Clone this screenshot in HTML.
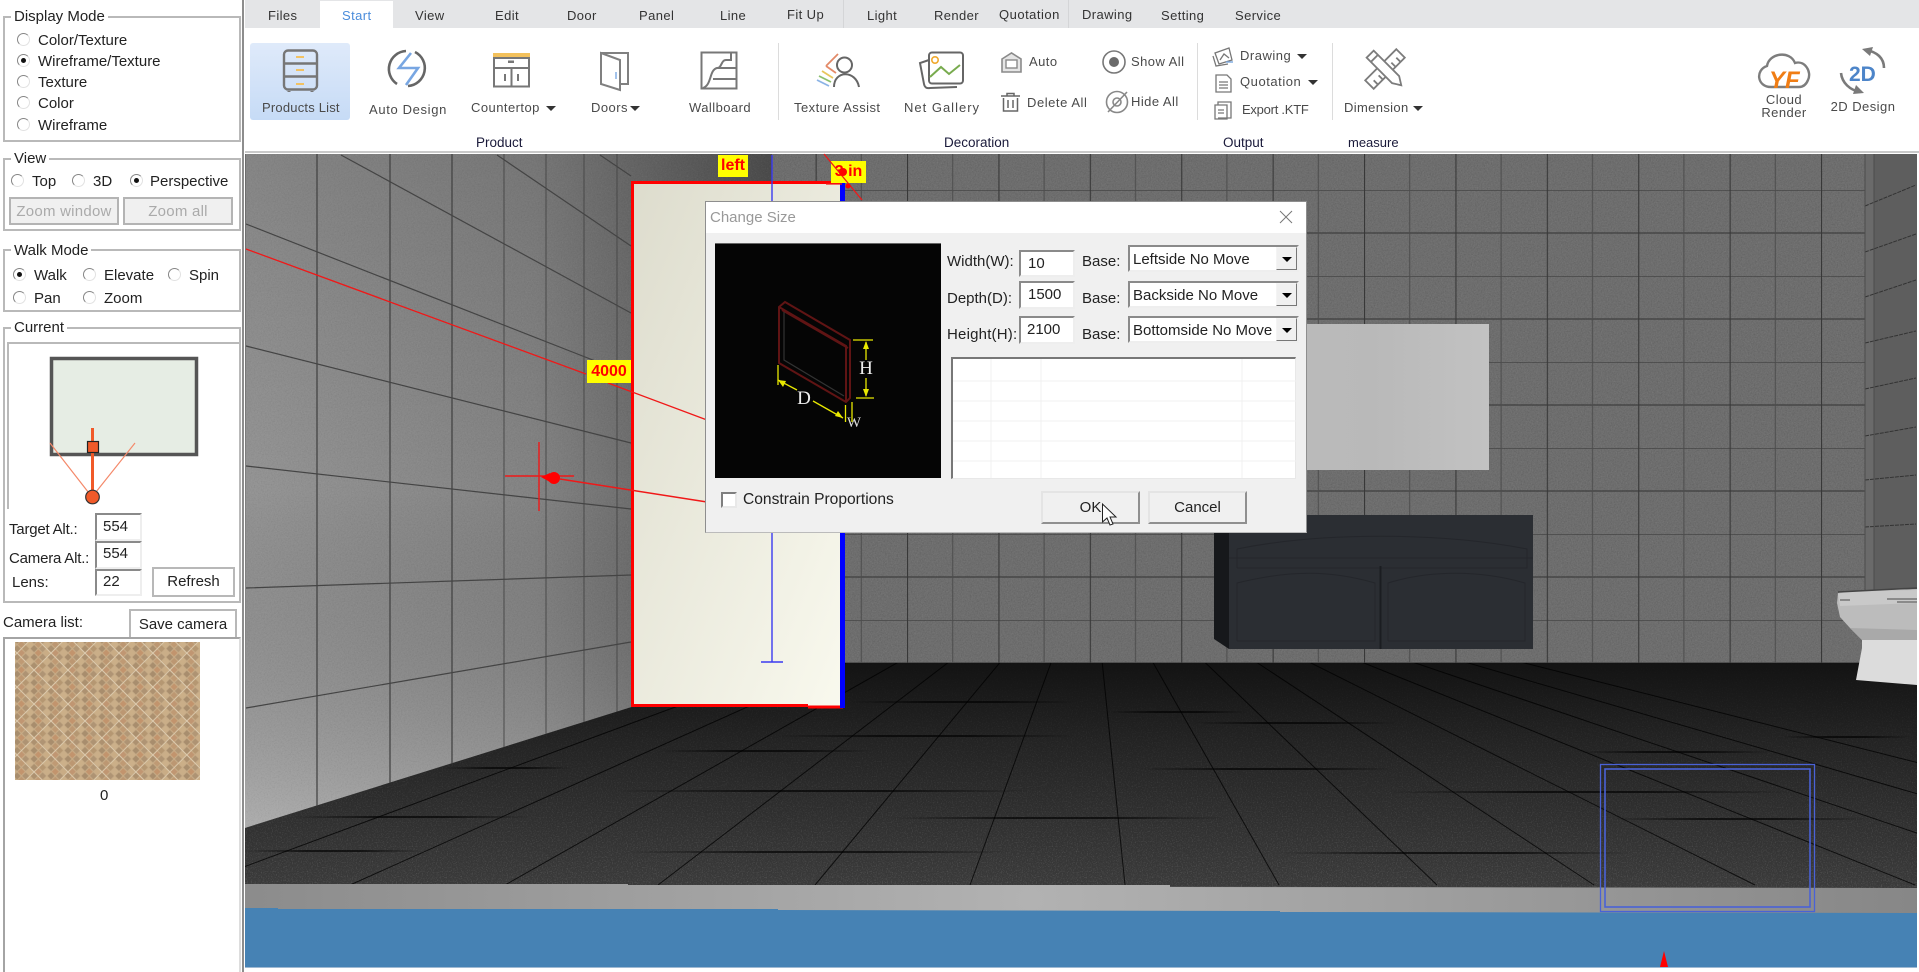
<!DOCTYPE html>
<html><head><meta charset="utf-8"><style>
html,body{margin:0;padding:0;width:1919px;height:972px;overflow:hidden;background:#fff;font-family:"Liberation Sans",Arial,sans-serif;color:#222}
svg.full{position:absolute;left:0;top:0;width:1919px;height:972px}
.t{position:absolute;white-space:nowrap;line-height:20px;font-size:15px}
.tab{font-size:13px;letter-spacing:.4px;color:#333;top:6px}
.rb{font-size:13px;letter-spacing:.45px;color:#4a4a4a}
.gp{font-size:13.5px;color:#1a1a3a;top:133px}
.c{transform:translateX(-50%)}
.box{position:absolute;box-sizing:border-box}
.fs{border:2px solid #b9b9b9}
.lg{background:#fff;padding:0 3px;margin-left:-3px}
.r{position:absolute;width:13px;height:13px;box-sizing:border-box;border-radius:50%;border:1px solid;border-color:#858585 #e2e2e2 #e2e2e2 #858585;background:#fff}
.r.on:after{content:"";position:absolute;left:3px;top:3px;width:5px;height:5px;border-radius:50%;background:#111}
.in{position:absolute;box-sizing:border-box;border:2px solid;border-color:#8a8a8a #eee #eee #8a8a8a;background:#fff;font-size:15px;line-height:22px;padding-left:6px;white-space:nowrap}
.btn{position:absolute;box-sizing:border-box;border:2px solid;border-color:#e4e4e4 #8f8f8f #8f8f8f #e4e4e4;background:#f0f0f0;font-size:15px;text-align:center;white-space:nowrap}
.fl{border:2px solid #b8b8b8;background:#fff}
.dis{border:2px solid #b4b4b4;background:#f0f0f0;color:#aaa;letter-spacing:.25px}
.cb{position:absolute;box-sizing:border-box;border:2px solid;border-color:#8a8a8a #eee #eee #8a8a8a;background:#fff;font-size:15px;line-height:25px;padding-left:3px;left:1128px;width:171px;height:27px;white-space:nowrap;overflow:hidden}
.cb i{position:absolute;right:0;top:0;width:21px;height:100%;box-sizing:border-box;background:#f0f0f0;border:1px solid;border-color:#f4f4f4 #777 #777 #f4f4f4}
.cb i:after{content:"";position:absolute;left:5px;top:9px;border:5px solid transparent;border-top:5px solid #000;border-bottom:0}
</style></head><body>

<!-- 3D scene -->
<svg class="full" viewBox="0 0 1919 972">
<defs>
<filter id="nz" x="0" y="0" width="100%" height="100%"><feTurbulence type="fractalNoise" baseFrequency=".8" numOctaves="2" seed="4"/><feColorMatrix values="0 0 0 0 1 0 0 0 0 1 0 0 0 0 1 2.4 0 0 0 -1.15"/></filter>
<filter id="nd" x="0" y="0" width="100%" height="100%"><feTurbulence type="fractalNoise" baseFrequency=".7" numOctaves="2" seed="9"/><feColorMatrix values="0 0 0 0 0 0 0 0 0 0 0 0 0 0 0 2.4 0 0 0 -1.1"/></filter>
<linearGradient id="lw" x1="246" x2="772" y1="0" y2="0" gradientUnits="userSpaceOnUse"><stop offset="0" stop-color="#949494"/><stop offset=".55" stop-color="#838383"/><stop offset="1" stop-color="#525252"/></linearGradient>
<linearGradient id="lwv" x1="0" x2="0" y1="154" y2="828" gradientUnits="userSpaceOnUse"><stop offset="0" stop-color="#000" stop-opacity=".1"/><stop offset=".5" stop-color="#000" stop-opacity="0"/><stop offset="1" stop-color="#fff" stop-opacity=".25"/></linearGradient>
<linearGradient id="fl" x1="0" x2="0" y1="663" y2="885" gradientUnits="userSpaceOnUse"><stop offset="0" stop-color="#131313"/><stop offset=".35" stop-color="#232323"/><stop offset="1" stop-color="#3a3a3a"/></linearGradient>
<linearGradient id="fm" x1="0" x2="0" y1="663" y2="885" gradientUnits="userSpaceOnUse"><stop offset="0" stop-color="#fff" stop-opacity=".1"/><stop offset="1" stop-color="#fff" stop-opacity="1"/></linearGradient>
<mask id="fmk" maskUnits="userSpaceOnUse" x="245" y="663" width="1672" height="225"><rect x="245" y="663" width="1672" height="225" fill="url(#fm)"/></mask>
<linearGradient id="hg"><stop offset="0" stop-color="#000" stop-opacity="0"/><stop offset=".35" stop-color="#000" stop-opacity=".65"/><stop offset=".65" stop-color="#000" stop-opacity=".65"/><stop offset="1" stop-color="#000" stop-opacity="0"/></linearGradient>
<radialGradient id="lg" cx="1030" cy="900" r="900" gradientUnits="userSpaceOnUse"><stop offset="0" stop-color="#b2b2b2"/><stop offset="1" stop-color="#868686"/></radialGradient>
<linearGradient id="bx" x1="0" y1="0" x2="1" y2="1"><stop offset="0" stop-color="#dddccd"/><stop offset="1" stop-color="#f9f9ee"/></linearGradient>
<linearGradient id="mr" x1="0" x2="1"><stop offset="0" stop-color="#bcbcbc"/><stop offset=".6" stop-color="#b9b9b9"/><stop offset="1" stop-color="#c2c2c2"/></linearGradient>
<pattern id="tile" patternUnits="userSpaceOnUse" x="1364" y="190" width="91.4" height="86">
<path d="M0 0H91.4M0 43H91.4" stroke="#3e3e3e" stroke-width="1.2" fill="none"/><path d="M.5 0V86" stroke="#383838" stroke-width="1.2"/><path d="M45.7 0V86" stroke="#4c4c4c" stroke-width="1"/>
</pattern>
<clipPath id="cf"><polygon points="245,828 772,663 1917,663 1917,888 245,885"/></clipPath>
<clipPath id="cl"><polygon points="246,154 772,154 772,663 245,828"/></clipPath>
</defs>
<rect x="245" y="154" width="1672" height="814" fill="#6d6d6d"/>
<!-- back wall -->
<rect x="772" y="154" width="1095" height="510" fill="#6e6e6e"/>
<rect x="772" y="154" width="1095" height="510" filter="url(#nd)" opacity=".1"/>
<rect x="772" y="154" width="1095" height="510" filter="url(#nz)" opacity=".08"/>
<rect x="772" y="154" width="1095" height="510" fill="url(#tile)"/>
<!-- right wall -->
<rect x="1865" y="154" width="52" height="510" fill="#5e5e5e"/>
<rect x="1865" y="154" width="9" height="510" fill="#6a6a6a"/>
<path d="M1865 206L1916 185M1865 252L1916 234M1865 297L1916 280M1865 343L1916 331M1865 389L1916 378M1865 436L1916 427M1865 480L1916 475M1865 527L1916 524" stroke="#333" stroke-width="1" stroke-dasharray="4 1"/>
<path d="M1865 154V664M1874 154V664" stroke="#4c4c4c" stroke-width="1"/>
<!-- left wall -->
<polygon points="246,154 772,154 772,663 245,828" fill="url(#lw)"/>
<polygon points="246,154 772,154 772,663 245,828" fill="url(#lwv)"/>
<g clip-path="url(#cl)">
<rect x="246" y="154" width="526" height="674" filter="url(#nz)" opacity=".06"/>
<rect x="246" y="154" width="526" height="674" filter="url(#nd)" opacity=".06"/>
<g stroke="#444" fill="none">
<path stroke-width="1.3" d="M317 154V840M390 154V840M452 154V840"/>
<path stroke-width=".9" d="M504 154V840M546 154V840M584 154V840M617 154V840"/>
<path stroke-width="1.2" d="M341 155L631 313M246 224L631 375M497 155L631 246M600 155L631 176M246 346L631 443M246 466L631 509M246 588L631 575M246 708L631 642"/>
</g></g>
<!-- floor -->
<polygon points="245,828 772,663 1917,663 1917,888 245,885" fill="url(#fl)"/>
<g clip-path="url(#cf)">
<g mask="url(#fmk)"><rect x="245" y="663" width="1672" height="225" filter="url(#nz)" opacity=".16"/></g>
<g stroke="#000" stroke-width="1" opacity=".75">
<path d="M1091 553L40 885M1091 553L195 885M1091 553L350 885M1091 553L505 885M1091 553L658 885M1091 553L815 885M1091 553L970 885M1091 553L1125 885M1091 553L1279 885M1091 553L1437 885M1091 553L1594 885M1091 553L1755 885M1091 553L1915 885M1091 553L2070 885M1091 553L2230 885M1091 553L2400 885"/>
</g>
<g fill="url(#hg)">
<rect x="850" y="701" width="225" height="2"/><rect x="1107" y="711" width="139" height="2"/><rect x="1193" y="722" width="203" height="2"/><rect x="775" y="735" width="300" height="2"/><rect x="658" y="750" width="214" height="2"/><rect x="443" y="767" width="129" height="2"/><rect x="615" y="790" width="417" height="2"/><rect x="293" y="816" width="236" height="2"/><rect x="893" y="817" width="332" height="2"/><rect x="245" y="850" width="177" height="2"/><rect x="625" y="851" width="386" height="2"/><rect x="1279" y="852" width="353" height="2"/><rect x="1139" y="768" width="257" height="2"/><rect x="1386" y="791" width="406" height="2"/><rect x="1610" y="818" width="257" height="2"/><rect x="1578" y="751" width="193" height="2"/><rect x="1782" y="736" width="128" height="2"/>
</g></g>
<!-- ledge and water -->
<polygon points="245,884 628,884 628,885 1170,885 1170,887 1917,888 1917,914 245,910" fill="url(#lg)"/>
<polygon points="245,908 278,908 278,909 778,909 778,910 1280,911 1280,912 1917,913 1917,968 245,968" fill="#4682b4"/>
<rect x="245" y="967" width="1672" height="1" fill="#9fb9d2"/>
<polygon points="1664,951 1660,967 1668,967" fill="#f00"/>
<!-- blue rect -->
<g fill="none" stroke="#4a62d6"><rect x="1600.5" y="764.5" width="214" height="147" stroke-width="1.3"/><rect x="1605" y="769" width="205" height="138" stroke-width="1.6"/></g>
<!-- mirror -->
<rect x="1200" y="324" width="289" height="146" fill="url(#mr)"/>
<!-- cabinet -->
<polygon points="1214,532 1229,515 1229,649 1214,639" fill="#16181b"/>
<rect x="1229" y="515" width="304" height="134" fill="#2b2e33"/>
<g fill="none" stroke="#24262b" stroke-width="1">
<path d="M1237 568V549M1237 549C1320 532 1440 532 1527 549V568H1237M1229 558H1533"/>
<path d="M1237 641V583C1290 570 1330 570 1375 583V641H1237"/>
<path d="M1388 641V583C1430 570 1480 570 1525 583V641H1388"/>
</g>
<path d="M1380.5 566V649" stroke="#1b1d21" stroke-width="2"/>
<!-- toilet -->
<path d="M1838 593L1845 591L1917 589V640H1862L1850 628L1840 617L1837 603Z" fill="#bcbcbc"/>
<path d="M1838 594L1845 592L1917 590V603L1840 606Z" fill="#c9c9c9"/>
<path d="M1850 628L1862 640H1917V630Z" fill="#a9a9a9"/>
<path d="M1862 640H1917V685L1856 680L1862 648Z" fill="#dcdcdc"/>
<path d="M1838 592L1917 588" stroke="#444" stroke-width="1.5"/>
<path d="M1840 600H1850M1887 599H1917M1897 602H1917" stroke="#666" stroke-width="1.2"/>
<!-- wall panel -->
<rect x="631" y="181" width="212" height="526" fill="url(#bx)"/>
<path d="M632.5 707V182.5H843" fill="none" stroke="#f00" stroke-width="3"/>
<path d="M631 705.5H808" stroke="#f00" stroke-width="3"/><path d="M808 707H843" stroke="#f00" stroke-width="3"/>
<rect x="840" y="181" width="5" height="527" fill="#00f"/>
<path d="M772 155V662M761 662H783" stroke="#3a3af0" stroke-width="1.4" fill="none"/>
<!-- red dims -->
<path d="M246 249L586 374M608 383L707 420" stroke="#f01818" stroke-width="1.3"/>
<path d="M560 479L707 502" stroke="#f01818" stroke-width="1.5"/>
<path d="M539 442V511M505 476H574" stroke="#f01818" stroke-width="1.4"/>
<circle cx="554" cy="478" r="6" fill="#f00"/><polygon points="541,477 550,473 550,482" fill="#f00"/>
</svg>

<!-- scene labels -->
<div class="box" style="left:718px;top:155px;width:30px;height:22px;background:#ff0;color:#f00;font:bold 16px/22px 'Liberation Sans';text-align:center">left</div>
<div class="box" style="left:831px;top:161px;width:35px;height:22px;background:#ff0;color:#f00;font:bold 16px/22px 'Liberation Sans';text-align:center">3 in</div>
<div class="box" style="left:587px;top:360px;width:44px;height:23px;background:#ff0;color:#f00;font:bold 16px/23px 'Liberation Sans';text-align:center">4000</div>

<!-- left panel -->
<div class="box" style="left:0;top:0;width:242px;height:972px;background:#fff"></div>
<div class="box" style="left:242px;top:0;width:2px;height:972px;background:#8d8d8d"></div>
<div class="box" style="left:244px;top:0;width:1px;height:972px;background:#fff"></div>

<div class="box fs" style="left:3px;top:16px;width:238px;height:126px"></div>
<div class="t lg" style="left:14px;top:7px">Display Mode</div>
<div class="r" style="left:17px;top:33px"></div><div class="t" style="left:38px;top:31px">Color/Texture</div>
<div class="r on" style="left:17px;top:54px"></div><div class="t" style="left:38px;top:52px">Wireframe/Texture</div>
<div class="r" style="left:17px;top:75px"></div><div class="t" style="left:38px;top:73px">Texture</div>
<div class="r" style="left:17px;top:96px"></div><div class="t" style="left:38px;top:94px">Color</div>
<div class="r" style="left:17px;top:118px"></div><div class="t" style="left:38px;top:116px">Wireframe</div>

<div class="box fs" style="left:3px;top:158px;width:238px;height:73px"></div>
<div class="t lg" style="left:14px;top:149px">View</div>
<div class="r" style="left:11px;top:174px"></div><div class="t" style="left:32px;top:172px">Top</div>
<div class="r" style="left:72px;top:174px"></div><div class="t" style="left:93px;top:172px">3D</div>
<div class="r on" style="left:130px;top:174px"></div><div class="t" style="left:150px;top:172px">Perspective</div>
<div class="btn dis" style="left:9px;top:197px;width:110px;height:28px;line-height:25px">Zoom window</div>
<div class="btn dis" style="left:123px;top:197px;width:110px;height:28px;line-height:25px">Zoom all</div>

<div class="box fs" style="left:3px;top:249px;width:238px;height:63px"></div>
<div class="t lg" style="left:14px;top:241px">Walk Mode</div>
<div class="r on" style="left:13px;top:268px"></div><div class="t" style="left:34px;top:266px">Walk</div>
<div class="r" style="left:83px;top:268px"></div><div class="t" style="left:104px;top:266px">Elevate</div>
<div class="r" style="left:168px;top:268px"></div><div class="t" style="left:189px;top:266px">Spin</div>
<div class="r" style="left:13px;top:291px"></div><div class="t" style="left:34px;top:289px">Pan</div>
<div class="r" style="left:83px;top:291px"></div><div class="t" style="left:104px;top:289px">Zoom</div>

<div class="box fs" style="left:3px;top:327px;width:238px;height:276px"></div>
<div class="t lg" style="left:14px;top:318px">Current</div>
<div class="box" style="left:7px;top:342px;width:233px;height:167px;border-top:2px solid #b9b9b9;border-left:2px solid #b9b9b9"></div>
<div class="t" style="left:9px;top:520px;letter-spacing:-.2px">Target Alt.:</div>
<div class="t" style="left:9px;top:549px;letter-spacing:-.2px">Camera Alt.:</div>
<div class="t" style="left:12px;top:573px">Lens:</div>
<div class="in" style="left:95px;top:513px;width:47px;height:28px;line-height:23px">554</div>
<div class="in" style="left:95px;top:541px;width:47px;height:28px;line-height:21px">554</div>
<div class="in" style="left:95px;top:569px;width:47px;height:27px">22</div>
<div class="btn fl" style="left:152px;top:567px;width:83px;height:30px;line-height:25px">Refresh</div>
<div class="t" style="left:3px;top:613px">Camera list:</div>
<div class="btn fl" style="left:129px;top:609px;width:108px;height:32px;line-height:28px;border-bottom:0">Save camera</div>
<div class="box" style="left:3px;top:637px;width:238px;height:335px;border:2px solid #a4a4a4;border-right-color:#ddd;border-bottom:0;background:#fff"></div>
<div class="t" style="left:100px;top:786px">0</div>

<!-- tabs -->
<div class="box" style="left:245px;top:0;width:1674px;height:28px;background:#e4e5e7"></div>
<div class="box" style="left:320px;top:1px;width:73px;height:27px;background:#fff"></div>
<div class="box" style="left:843px;top:0;width:1px;height:28px;background:#d4d5d7"></div>
<div class="box" style="left:1068px;top:0;width:1px;height:28px;background:#d4d5d7"></div>
<div class="t tab" style="left:268px">Files</div>
<div class="t tab" style="left:342px;color:#4a8cdb">Start</div>
<div class="t tab" style="left:415px">View</div>
<div class="t tab" style="left:495px">Edit</div>
<div class="t tab" style="left:567px">Door</div>
<div class="t tab" style="left:639px">Panel</div>
<div class="t tab" style="left:720px">Line</div>
<div class="t tab" style="left:787px;top:5px">Fit Up</div>
<div class="t tab" style="left:867px">Light</div>
<div class="t tab" style="left:934px">Render</div>
<div class="t tab" style="left:999px;top:5px;letter-spacing:.5px">Quotation</div>
<div class="t tab" style="left:1082px;top:5px">Drawing</div>
<div class="t tab" style="left:1161px">Setting</div>
<div class="t tab" style="left:1235px">Service</div>

<!-- ribbon -->
<div class="box" style="left:245px;top:28px;width:1674px;height:125px;background:#fff;border-bottom:2px solid #c9c9c9"></div>
<div class="box" style="left:250px;top:43px;width:100px;height:77px;border-radius:3px;background:linear-gradient(#dfeafa,#c6dbf6)"></div>
<div class="box" style="left:778px;top:43px;width:1px;height:77px;background:#dcdcdc"></div>
<div class="box" style="left:1197px;top:43px;width:1px;height:77px;background:#dcdcdc"></div>
<div class="box" style="left:1332px;top:43px;width:1px;height:77px;background:#dcdcdc"></div>
<div class="t rb" style="left:262px;top:98px;letter-spacing:.2px">Products List</div>
<div class="t rb" style="left:369px;top:100px;letter-spacing:.65px">Auto Design</div>
<div class="t rb" style="left:471px;top:98px">Countertop</div>
<div class="t rb" style="left:591px;top:98px">Doors</div>
<div class="t rb" style="left:689px;top:98px">Wallboard</div>
<div class="t rb" style="left:794px;top:98px">Texture Assist</div>
<div class="t rb" style="left:904px;top:98px;letter-spacing:1px">Net Gallery</div>
<div class="t rb" style="left:1029px;top:52px">Auto</div>
<div class="t rb" style="left:1027px;top:93px;letter-spacing:.55px">Delete All</div>
<div class="t rb" style="left:1131px;top:52px">Show All</div>
<div class="t rb" style="left:1131px;top:92px">Hide All</div>
<div class="t rb" style="left:1240px;top:46px;letter-spacing:.5px">Drawing</div>
<div class="t rb" style="left:1240px;top:72px;letter-spacing:.55px">Quotation</div>
<div class="t rb" style="left:1242px;top:100px;letter-spacing:-.25px">Export .KTF</div>
<div class="t rb" style="left:1344px;top:98px;letter-spacing:.35px">Dimension</div>
<div class="t rb c" style="left:1784px;top:90px">Cloud</div>
<div class="t rb c" style="left:1784px;top:103px">Render</div>
<div class="t rb c" style="left:1863px;top:97px">2D Design</div>
<div class="t gp" style="left:476px">Product</div>
<div class="t gp" style="left:944px">Decoration</div>
<div class="t gp" style="left:1223px">Output</div>
<div class="t gp" style="left:1348px;font-size:13px">measure</div>

<!-- dialog -->
<div class="box" style="left:705px;top:201px;width:602px;height:332px;background:#f0f0f0;border:1px solid #8e8e8e;border-bottom-color:#bbb"></div>
<div class="box" style="left:706px;top:202px;width:600px;height:31px;background:#fff"></div>
<div class="t" style="left:710px;top:208px;color:#999">Change Size</div>
<div class="box" style="left:715px;top:243px;width:226px;height:235px;background:#050505;border-top:1px solid #666"></div>
<div class="t" style="left:947px;top:252px">Width(W):</div>
<div class="t" style="left:947px;top:289px">Depth(D):</div>
<div class="t" style="left:947px;top:325px;letter-spacing:.2px">Height(H):</div>
<div class="in" style="left:1019px;top:250px;width:56px;height:27px;padding-left:7px;line-height:23px">10</div>
<div class="in" style="left:1019px;top:281px;width:56px;height:28px;padding-left:7px;line-height:23px">1500</div>
<div class="in" style="left:1019px;top:316px;width:56px;height:28px;padding-left:6px;line-height:23px">2100</div>
<div class="t" style="left:1082px;top:252px">Base:</div>
<div class="t" style="left:1082px;top:289px">Base:</div>
<div class="t" style="left:1082px;top:325px">Base:</div>
<div class="cb" style="top:245px">Leftside No Move<i></i></div>
<div class="cb" style="top:281px">Backside No Move<i></i></div>
<div class="cb" style="top:316px">Bottomside No Move<i></i></div>
<div class="box" style="left:951px;top:357px;width:345px;height:122px;background:#fff;border-top:2px solid #777;border-left:2px solid #777;border-right:1px solid #e8e8e8;border-bottom:1px solid #e8e8e8"></div>
<div class="box" style="left:721px;top:492px;width:16px;height:16px;background:#fff;border:2px solid;border-color:#7f7f7f #e8e8e8 #e8e8e8 #7f7f7f"></div>
<div class="t" style="left:743px;top:490px;font-size:15.6px">Constrain Proportions</div>
<div class="btn" style="left:1041px;top:491px;width:99px;height:33px;line-height:29px">OK</div>
<div class="btn" style="left:1148px;top:491px;width:99px;height:33px;line-height:29px">Cancel</div>

<!-- overlay vector art -->
<svg class="full" viewBox="0 0 1919 972">
<defs>
<pattern id="tx" patternUnits="userSpaceOnUse" width="24" height="24" patternTransform="rotate(45 15 642)">
<rect width="24" height="24" fill="#c8ad88"/>
<rect x=".7" y=".7" width="5" height="5" fill="#ad9170"/><rect x="6.7" y=".7" width="5" height="5" fill="#bf9a74"/><rect x="12.7" y=".7" width="5" height="5" fill="#b29776"/><rect x="18.7" y=".7" width="5" height="5" fill="#c9ac85"/>
<rect x=".7" y="6.7" width="5" height="5" fill="#cbaf88"/><rect x="6.7" y="6.7" width="5" height="5" fill="#a88e6e"/><rect x="12.7" y="6.7" width="5" height="5" fill="#c2946d"/><rect x="18.7" y="6.7" width="5" height="5" fill="#ae9373"/>
<rect x=".7" y="12.7" width="5" height="5" fill="#b59772"/><rect x="6.7" y="12.7" width="5" height="5" fill="#caae88"/><rect x="12.7" y="12.7" width="5" height="5" fill="#a88d6d"/><rect x="18.7" y="12.7" width="5" height="5" fill="#bc9772"/>
<rect x=".7" y="18.7" width="5" height="5" fill="#c09672"/><rect x="6.7" y="18.7" width="5" height="5" fill="#af9474"/><rect x="12.7" y="18.7" width="5" height="5" fill="#ccb08a"/><rect x="18.7" y="18.7" width="5" height="5" fill="#ab906f"/>
<path d="M0 .3H24M.3 0V24" stroke="#e2d3b9" stroke-width=".8"/>
</pattern>
</defs>
<!-- label overdraw -->
<path d="M824 154L862 200M826 184H842" stroke="#f01818" stroke-width="1.3" fill="none"/>
<circle cx="843" cy="172" r="4" fill="#f00"/><circle cx="848" cy="186" r="2.5" fill="#f00"/>
<!-- current view diagram -->
<rect x="51.5" y="358.5" width="145" height="96" fill="#e6ede4" stroke="#555" stroke-width="3.5"/>
<path d="M92.5 428V497" stroke="#f15a29" stroke-width="3"/>
<path d="M92 497L50 443M92 497L135 443" stroke="#f4896a" stroke-width="1.2"/>
<rect x="87.5" y="441.5" width="11" height="11" fill="#f15a29" stroke="#222" stroke-width="1.2"/>
<circle cx="92.5" cy="497" r="6.8" fill="#f15a29" stroke="#333" stroke-width="1.2"/>
<!-- thumbnail -->
<rect x="15" y="642" width="185" height="138" fill="url(#tx)"/>
<!-- ribbon small arrows -->
<g fill="#333"><polygon points="546,106 556,106 551,111"/><polygon points="630,106 640,106 635,111"/><polygon points="1297,54 1307,54 1302,59"/><polygon points="1308,80 1318,80 1313,85"/><polygon points="1413,106 1423,106 1418,111"/></g>
<!-- products list -->
<g fill="none" stroke="#767676" stroke-width="2.4"><rect x="284" y="50.5" width="33" height="39" rx="4"/><path d="M284 63.5H317M284 76.5H317"/><path d="M289 91V92M312 91V92" stroke-width="3"/></g>
<path d="M296 57H304M296 70H304M296 84H304" stroke="#f2c263" stroke-width="2"/>
<!-- auto design -->
<g fill="none" stroke-width="2.6"><path d="M406 51A18 18 0 0 0 397 84" stroke="#666"/><path d="M415 52A18 18 0 0 1 408 86" stroke="#666"/><path d="M411 53L399 68H418L406 85" stroke="#78a6e2"/></g>
<!-- countertop -->
<rect x="493" y="53" width="37" height="5" fill="#f3c15c"/>
<g fill="none" stroke="#777" stroke-width="2"><rect x="494" y="58" width="35" height="28.5"/><path d="M494 68H529M511.5 68V86"/><path d="M505 74V81M518 74V81" /></g><rect x="508" y="60.5" width="6" height="2.5" fill="#777"/>
<!-- doors -->
<g fill="none" stroke="#808080" stroke-width="2"><path d="M601 53L620 60V90L601 84Z"/><path d="M601 53H628V84H620"/></g><path d="M616 72V79" stroke="#8cb4e6" stroke-width="1.6"/>
<!-- wallboard -->
<g fill="none" stroke="#777" stroke-width="2"><rect x="701.5" y="52.5" width="35" height="36"/><path d="M731 53V60H726C721 60 722 68 717 68C709 70 712 85 703 88"/><path d="M717 68H737M713 79H737"/></g>
<!-- texture assist -->
<circle cx="844.5" cy="65" r="7.5" fill="none" stroke="#666" stroke-width="2"/><path d="M834 87C834 70 856 70 859 87" fill="none" stroke="#666" stroke-width="2"/>
<g fill="none" stroke-width="1.8"><path d="M838 54L826 66" stroke="#e28a68"/><path d="M826 66L836 73" stroke="#e58a68"/><path d="M822 71L833 78" stroke="#e8c65c"/><path d="M819 76L831 82" stroke="#8cbf6e"/><path d="M817 80L829 86" stroke="#8cb4e6"/></g>
<!-- net gallery -->
<g fill="none" stroke="#666" stroke-width="2"><rect x="929" y="52.5" width="34" height="31" rx="3"/><path d="M929 60L920 63L924 84Q925 89 930 88L957 87"/></g>
<circle cx="935" cy="60" r="3.2" fill="none" stroke="#f0a92d" stroke-width="1.6"/><path d="M930 77L941 67L949 74L960 65" fill="none" stroke="#78ab4e" stroke-width="2"/>
<!-- auto / delete / show / hide -->
<path d="M1002 59L1011.5 53L1021 59V72H1002Z" fill="#e5e5e5" stroke="#8a8a8a" stroke-width="1.6"/><rect x="1006" y="60" width="11" height="8" fill="#fff" stroke="#8a8a8a" stroke-width="1.4"/>
<g fill="none" stroke="#666" stroke-width="1.5"><path d="M1001 96H1020M1007 96V93.5H1014V96M1003.5 98V111H1017.5V98M1008 100V108M1013 100V108"/></g>
<circle cx="1114" cy="62" r="11" fill="none" stroke="#777" stroke-width="1.6"/><circle cx="1114" cy="62" r="5" fill="#6a6a6a"/>
<g fill="none" stroke="#888" stroke-width="1.6"><circle cx="1117" cy="102" r="10.5"/><path d="M1108 112L1127 92"/><circle cx="1117" cy="102" r="4"/></g>
<!-- output icons -->
<g fill="none" stroke="#777" stroke-width="1.3"><path d="M1215 53L1229 48L1232 60L1219 64Z"/><path d="M1213 56L1216 66L1228 64"/><path d="M1220 60L1224 54L1229 58"/></g><path d="M1226 62H1233" stroke="#7aa7de" stroke-width="1.4"/>
<g fill="none" stroke="#777" stroke-width="1.3"><path d="M1216 75H1227L1231 79V92H1216ZM1219 82H1228M1219 85H1228M1219 88H1228"/></g>
<g fill="none" stroke="#777" stroke-width="1.3"><path d="M1218 105V102H1231V118H1218M1215 105H1227V119H1215ZM1218 110H1224M1218 113H1224"/></g>
<!-- dimension -->
<g fill="none" stroke="#7c7c7c" stroke-width="1.8"><g transform="rotate(45 1385 69)"><rect x="1379" y="47" width="12" height="44"/><path d="M1385 53H1391M1385 60H1391M1385 78H1391M1385 85H1391"/></g><g transform="rotate(-45 1385 69)"><path d="M1380 48H1390V84L1385 92L1380 84Z" fill="#fff"/><path d="M1380 54H1390"/></g></g>
<!-- cloud -->
<path d="M1771 87C1757 87 1755 70 1767 66C1769 53 1790 50 1795 63C1805 60 1812 72 1808 80C1806 85 1803 87 1799 87Z" fill="none" stroke="#7d7d7d" stroke-width="2.4"/>
<text x="1769" y="88" font-family="Liberation Sans" font-size="24" font-weight="bold" font-style="italic" fill="#f07d14">YF</text>
<!-- 2D -->
<text x="1849" y="81" font-family="Liberation Sans" font-size="21" font-weight="bold" fill="#4d85c9">2D</text>
<g fill="none" stroke="#7a7a7a" stroke-width="2.6"><path d="M1866 50C1877 52 1884 58 1884 68"/><path d="M1841 73C1842 83 1850 90 1860 92"/></g><polygon points="1862,49 1873,47 1870,56" fill="#7a7a7a"/><polygon points="1864,93 1853,94 1856,85" fill="#7a7a7a"/>
<!-- dialog close -->
<path d="M1280 211L1292 223M1292 211L1280 223" stroke="#777" stroke-width="1"/>
<!-- table grid -->
<g stroke="#f0f0f0" stroke-width="1"><path d="M991 359V478M1041 359V478M1242 359V478M953 381H1296M953 401H1296M953 421H1296M953 441H1296M953 461H1296"/></g>
<!-- preview -->
<g fill="none" stroke="#601414" stroke-width="2"><path d="M779 307L785 302L850 340V398L846 402L779 363Z"/><path d="M779 307L846 346V402M782 310L848 348"/></g>
<path d="M784 312V360L844 396" fill="none" stroke="#333" stroke-width="1.2"/>
<g fill="none" stroke="#e8e800" stroke-width="1.3"><path d="M853 340H873M856 398H874M866 342V360M866 378V396M778 365V385M778 380L797 390M813 401L843 418M845.5 405V422M852 402V422"/></g>
<g fill="#e8e800"><polygon points="866,341 863,349 869,349"/><polygon points="866,397 863,389 869,389"/><polygon points="778,380 786,381 783,387"/><polygon points="843,418 835,416 838,411"/></g>
<text x="866" y="374" text-anchor="middle" font-family="Liberation Serif" font-size="19" fill="#eee">H</text>
<text x="804" y="404" text-anchor="middle" font-family="Liberation Serif" font-size="19" fill="#eee">D</text>
<text x="854" y="427" text-anchor="middle" font-family="Liberation Serif" font-size="15" fill="#ddd">W</text>
<!-- cursor -->
<polygon points="1102.5,504 1102.5,522 1107,518 1110,525 1113,524 1110,517 1116,517" fill="#fff" stroke="#222" stroke-width="1"/>
</svg>
</body></html>
